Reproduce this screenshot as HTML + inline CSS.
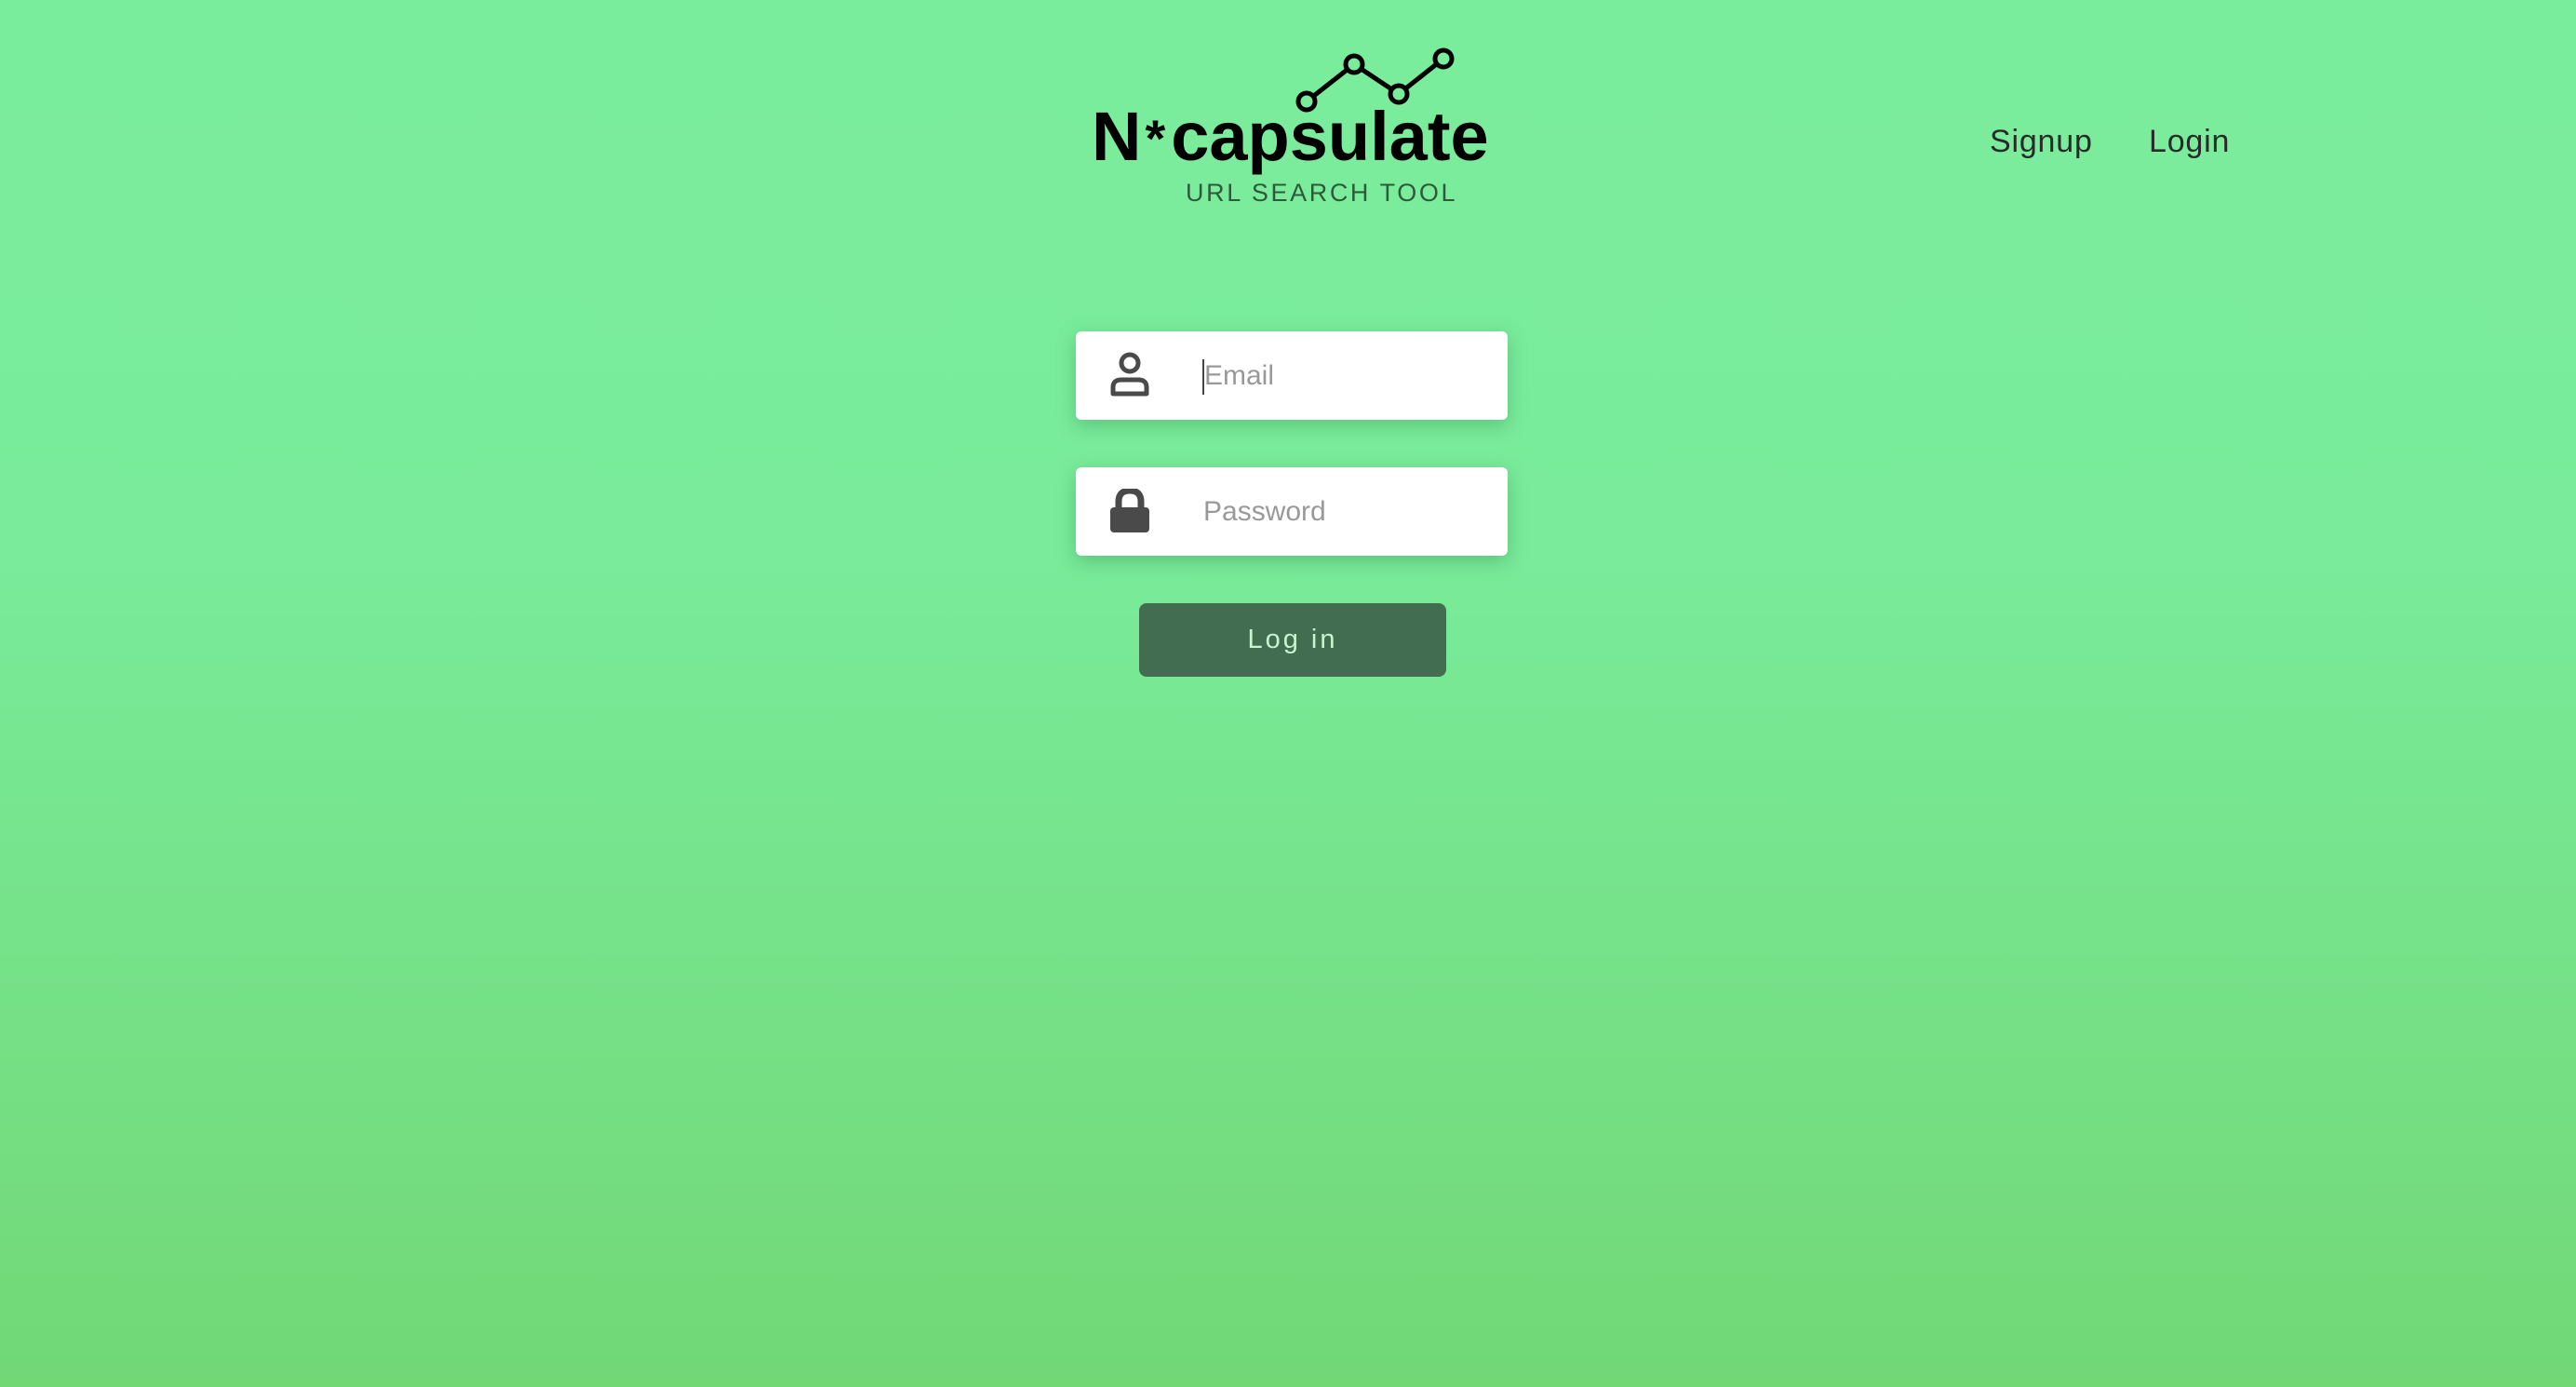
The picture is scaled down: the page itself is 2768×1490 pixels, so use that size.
<!DOCTYPE html>
<html><head><meta charset="utf-8"><style>
html,body{margin:0;padding:0}
body{width:2768px;height:1490px;position:relative;overflow:hidden;background:linear-gradient(#7aed9d 0%,#79eb9a 40%,#72d876 100%);font-family:"Liberation Sans",sans-serif}
.a{position:absolute}
.nav{font-size:34px;color:#2a2a2a;top:133px;letter-spacing:0.8px}
.box{left:1156px;width:464px;height:95px;background:#fff;border-radius:6px;box-shadow:0 6px 20px rgba(40,120,60,0.35)}
.ph{position:absolute;left:137px;top:31px;font-size:30px;color:#999}
</style></head><body>
<svg class="a" style="left:1390px;top:50px" width="180" height="75" viewBox="1390 50 180 75">
<polyline points="1404,109 1455,69 1503,101 1551,63" fill="none" stroke="#000" stroke-width="5"/>
<g fill="#7aec9c" stroke="#000" stroke-width="5">
<circle cx="1404" cy="109" r="9"/><circle cx="1455" cy="69" r="9"/><circle cx="1503" cy="101" r="9"/><circle cx="1551" cy="63" r="9"/></g></svg>
<div class="a" style="left:1173px;top:103px;font-size:74px;font-weight:bold;letter-spacing:0px;color:#000;line-height:88px;white-space:nowrap">N<span style="font-size:56px;vertical-align:4px;margin:0 6px 0 4px">*</span>capsulate</div>
<div class="a" style="left:1274px;top:192px;font-size:27px;letter-spacing:2.6px;color:#2d5a38">URL SEARCH TOOL</div>
<div class="a nav" style="left:2138px">Signup</div>
<div class="a nav" style="left:2309px">Login</div>
<div class="a box" style="top:356px">
<svg class="a" style="left:37px;top:22px" width="42" height="48" viewBox="0 0 42 48"><circle cx="21" cy="12" r="9" fill="none" stroke="#4a4a4a" stroke-width="5"/><path d="M3 45 V38 Q3 30 12 30 H30 Q39 30 39 38 V45 Z" fill="none" stroke="#4a4a4a" stroke-width="5" stroke-linejoin="round"/></svg>
<div class="a" style="left:136px;top:30px;width:2px;height:38px;background:#444"></div>
<div class="ph" style="left:138px">Email</div></div>
<div class="a box" style="top:502px">
<svg class="a" style="left:37px;top:23px" width="42" height="48" viewBox="0 0 42 48"><path d="M9 22 V14 Q9 2 21 2 Q33 2 33 14 V22" fill="none" stroke="#4a4a4a" stroke-width="7"/><rect x="0" y="20" width="42" height="27" rx="4" fill="#4a4a4a"/></svg>
<div class="ph">Password</div></div>
<div class="a" style="left:1224px;top:648px;width:330px;height:79px;background:#436d51;border-radius:8px;color:#c8f3cf;font-size:29px;letter-spacing:3px;text-align:center;line-height:79px">Log in</div>
</body></html>
